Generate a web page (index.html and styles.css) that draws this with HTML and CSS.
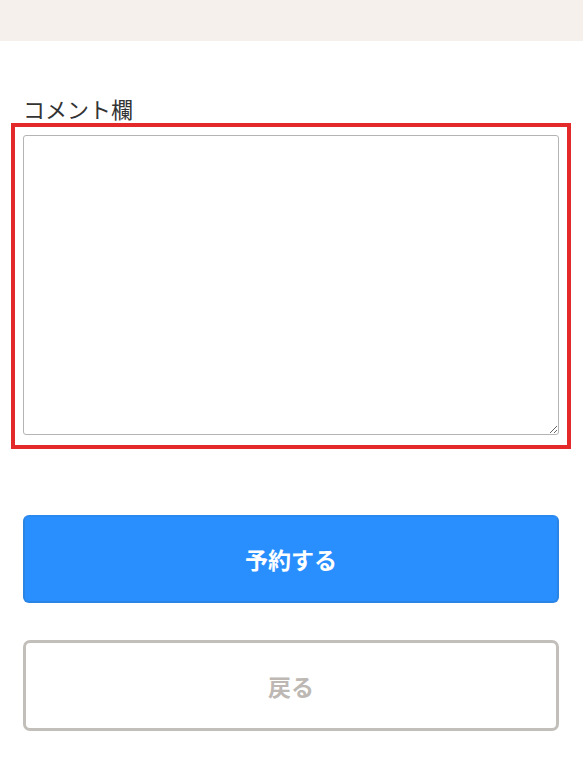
FILE: index.html
```html
<!DOCTYPE html>
<html lang="ja">
<head>
<meta charset="utf-8">
<link rel="stylesheet" href="styles.css">
</head>
<body>
<header class="topbar"></header>
<main class="content">
  <label class="label" for="comment">コメント欄</label>
  <div class="highlight">
    <textarea id="comment" class="comment"></textarea>
  </div>
  <div class="actions">
    <button class="btn btn-primary" type="button">予約する</button>
    <button class="btn btn-back" type="button">戻る</button>
  </div>
</main>
</body>
</html>
```

FILE: styles.css
```css
* { box-sizing: border-box; }
html, body { margin: 0; padding: 0; background: #fff; }
body {
  font-family: "Noto Sans CJK JP", "Noto Sans", sans-serif;
  color: #333;
}
.topbar {
  height: 41px;
  background: #f5f0ec;
}
.content {
  padding: 52px 24px 0 23px;
}
.label {
  display: block;
  font-size: 22px;
  line-height: 30px;
  color: #333;
}
.highlight {
  margin: 0 -12px;
  border: 4px solid #e3292a;
  padding: 8px 8px 10px 8px;
}
.comment {
  display: block;
  width: 100%;
  height: 300px;
  border: 1px solid #b4b4b4;
  border-radius: 3px;
  resize: vertical;
  font: inherit;
}
.actions {
  display: flex;
  flex-direction: column;
  gap: 37px;
  margin-top: 66px;
}
.btn {
  display: block;
  width: 100%;
  font-family: "Noto Sans CJK JP", sans-serif;
  font-weight: 700;
  font-size: 23px;
  cursor: pointer;
}
.btn-primary {
  height: 88px;
  background: #2a8ffe;
  color: #fff;
  border: 2px solid #2a84e4;
  border-top-color: #2a89f0;
  border-radius: 6px;
}
.btn-back {
  height: 91px;
  background: #fff;
  color: #bdb8b4;
  border: 3px solid #c2beba;
  border-radius: 7px;
}
```
